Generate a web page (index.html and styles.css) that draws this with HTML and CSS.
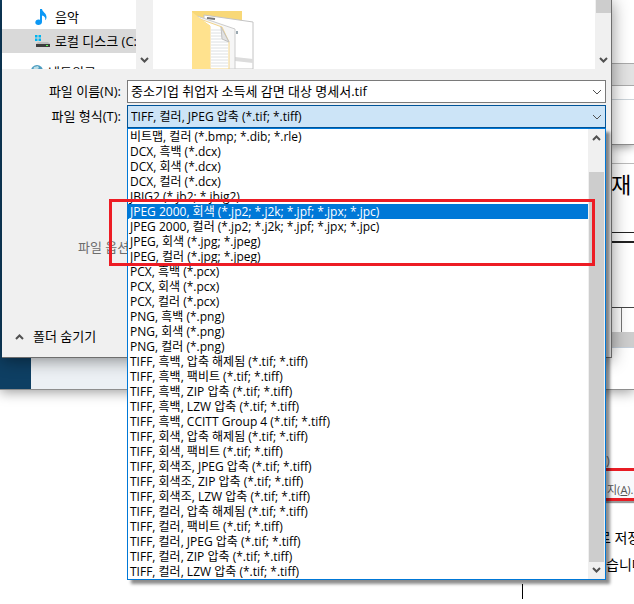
FILE: index.html
```
<!DOCTYPE html>
<html lang="ko">
<head>
  <meta charset="UTF-8" />
  <meta name="viewport" content="width=device-width, initial-scale=1.0" />
  <title>다른 이름으로 저장</title>
  <link rel="stylesheet" href="styles.css">
</head>
<body>
  <div class="desktop">

    <!-- Document page behind everything -->
    <div class="doc-shot">
      <span class="shot-note">)</span>
      <div class="shot-menu">지(<u>A</u>).</div>
    </div>
    <div class="doc-text">
      <p>로 저장</p>
      <p class="next">습니다</p>
    </div>
    <div class="caret"></div>

    <!-- Viewer window -->
    <div class="viewer">
      <div class="viewer-side"></div>
      <div class="viewer-body"></div>
      <div class="viewer-page">
        <div class="page-title">재</div>
        <div class="page-rule"></div>
        <div class="page-cell"></div>
        <div class="page-foot"></div>
        <div class="page-scroll"></div>
      </div>
    </div>
    <div class="panel">
      <div class="panel-top"></div>
      <div class="panel-bar"></div>
      <div class="panel-row"></div>
    </div>

    <!-- Save dialog -->
    <form class="dialog">
      <div class="browser">
        <nav class="tree">
          <a href="#" class="tree-item">
            <svg width="16" height="16" viewBox="0 0 16 16"><path d="M6 0h2c.3 3 4.500 4 4.500 8 0 1.500-.5 2.500-1.200 3.300.4-3-1-4.300-3.300-4.800v6.500C8 14.800 6.200 16 4.300 16 2.500 16 1.300 15 1.300 13.600c0-1.700 1.500-3 3.200-3 .6 0 1 .1 1.500.3z" fill="#0c98f5"/></svg>
            음악
          </a>
          <a href="#" class="tree-item selected">
            <svg width="16" height="14" viewBox="0 0 16 14"><path d="M1 1h2.500v2.500H1zM4.500 1H7v2.500H4.500zM1 4.500h2.500V7H1zM4.500 4.500H7V7H4.500z" fill="#00b4f0"/><path d="M4 8h10l2 2H2z" fill="#bdbdbd"/><path d="M2 10h14v3H2z" fill="#3d3d3d"/><path d="M12 11h2v1h-2z" fill="#5f5"/></svg>
            로컬 디스크 (C:)
          </a>
          <a href="#" class="tree-item network">
            <svg width="14" height="14" viewBox="0 0 14 14"><circle cx="6" cy="6" r="6" fill="#4c9cc0"/><path d="M3 2l4-1 1 2-3 2-3 1zM8 4l3 1v3H8z" fill="#b9dde6"/></svg>
            네트워크
          </a>
        </nav>
        <div class="scroll">
          <svg width="9" height="7" viewBox="0 0 9 7"><path d="M1 1l3.500 3.500L8 1" fill="none" stroke="#505050" stroke-width="2"/></svg>
        </div>
        <div class="files">
          <svg width="62" height="58" viewBox="0 0 62 58">
            <path d="M0 0h50v58H0z" fill="#f8d877"/>
            <path d="M12 4l49 7v47H12z" fill="#fff" stroke="#c4c4c4"/>
            <path d="M15 7l8 1" stroke="#777" stroke-width="2"/>
            <path d="M43 46l18 2v4l-18-2z" fill="#dcdcdc"/>
            <path d="M45 20v3" stroke="#9aa8b0" stroke-width="2"/>
            <path d="M5 5l38 13v40H18z" fill="#f6f6f6" stroke="#ccc"/>
            <path d="M8 8l22 8 7 15v27H18V15z" fill="#fff" stroke="#f3d489"/>
            <path d="M19 19h10M19 22h11M19 25h11M19 28h11M19 31h17M19 34h17M19 37h17M19 40h17M19 43h17M19 46h17M19 49h17M19 52h17M19 55h17" stroke="#dde0e2"/>
            <path d="M29 16l8 15-7-3z" fill="#e2e2e2" stroke="#c0c0c0"/>
            <path d="M0 1l18 14v43H0z" fill="#ffe28e"/>
          </svg>
        </div>
        <div class="scroll scroll-files">
          <div class="thumb"></div>
          <svg width="9" height="7" viewBox="0 0 9 7"><path d="M1 1l3.500 3.500L8 1" fill="none" stroke="#505050" stroke-width="2"/></svg>
        </div>
      </div>

      <div class="field">
        <label for="filename">파일 이름(N):</label>
        <div class="combo">
          <input type="text" id="filename" value="중소기업 취업자 소득세 감면 대상 명세서.tif">
          <svg class="arrow" width="10" height="6" viewBox="0 0 10 6"><path d="M1 1l4 4 4-4" fill="none" stroke="#505050"/></svg>
        </div>
      </div>
      <div class="field">
        <label for="filetype">파일 형식(T):</label>
        <div class="combo">
          <select id="filetype">
            <option>TIFF, 컬러, JPEG 압축 (*.tif; *.tiff)</option>
          </select>
          <svg class="arrow" width="10" height="6" viewBox="0 0 10 6"><path d="M1 1l4 4 4-4" fill="none" stroke="#505050"/></svg>

          <div class="popup">
            <ul role="listbox" aria-label="파일 형식">
              <li role="option">비트맵, 컬러 (*.bmp; *.dib; *.rle)</li>
              <li role="option">DCX, 흑백 (*.dcx)</li>
              <li role="option">DCX, 회색 (*.dcx)</li>
              <li role="option">DCX, 컬러 (*.dcx)</li>
              <li role="option">JBIG2 (*.jb2; *.jbig2)</li>
              <li role="option" class="active" aria-selected="true">JPEG 2000, 회색 (*.jp2; *.j2k; *.jpf; *.jpx; *.jpc)</li>
              <li role="option">JPEG 2000, 컬러 (*.jp2; *.j2k; *.jpf; *.jpx; *.jpc)</li>
              <li role="option">JPEG, 회색 (*.jpg; *.jpeg)</li>
              <li role="option">JPEG, 컬러 (*.jpg; *.jpeg)</li>
              <li role="option">PCX, 흑백 (*.pcx)</li>
              <li role="option">PCX, 회색 (*.pcx)</li>
              <li role="option">PCX, 컬러 (*.pcx)</li>
              <li role="option">PNG, 흑백 (*.png)</li>
              <li role="option">PNG, 회색 (*.png)</li>
              <li role="option">PNG, 컬러 (*.png)</li>
              <li role="option">TIFF, 흑백, 압축 해제됨 (*.tif; *.tiff)</li>
              <li role="option">TIFF, 흑백, 팩비트 (*.tif; *.tiff)</li>
              <li role="option">TIFF, 흑백, ZIP 압축 (*.tif; *.tiff)</li>
              <li role="option">TIFF, 흑백, LZW 압축 (*.tif; *.tiff)</li>
              <li role="option">TIFF, 흑백, CCITT Group 4 (*.tif; *.tiff)</li>
              <li role="option">TIFF, 회색, 압축 해제됨 (*.tif; *.tiff)</li>
              <li role="option">TIFF, 회색, 팩비트 (*.tif; *.tiff)</li>
              <li role="option">TIFF, 회색조, JPEG 압축 (*.tif; *.tiff)</li>
              <li role="option">TIFF, 회색조, ZIP 압축 (*.tif; *.tiff)</li>
              <li role="option">TIFF, 회색조, LZW 압축 (*.tif; *.tiff)</li>
              <li role="option">TIFF, 컬러, 압축 해제됨 (*.tif; *.tiff)</li>
              <li role="option">TIFF, 컬러, 팩비트 (*.tif; *.tiff)</li>
              <li role="option">TIFF, 컬러, JPEG 압축 (*.tif; *.tiff)</li>
              <li role="option">TIFF, 컬러, ZIP 압축 (*.tif; *.tiff)</li>
              <li role="option">TIFF, 컬러, LZW 압축 (*.tif; *.tiff)</li>
            </ul>
            <div class="popup-scroll">
              <svg width="9" height="7" viewBox="0 0 9 7"><path d="M1 6l3.500-3.500L8 6" fill="none" stroke="#505050" stroke-width="2"/></svg>
              <div class="thumb"></div>
              <svg width="9" height="7" viewBox="0 0 9 7"><path d="M1 1l3.500 3.500L8 1" fill="none" stroke="#505050" stroke-width="2"/></svg>
            </div>
            <div class="marker"></div>
          </div>
        </div>
      </div>

      <div class="options">파일 옵션</div>
      <button type="button" class="hide-folders">
        <svg width="9" height="7" viewBox="0 0 9 7"><path d="M1 6l3.500-3.500L8 6" fill="none" stroke="#505050" stroke-width="2"/></svg>
        폴더 숨기기
      </button>
    </form>

  </div>
</body>
</html>
```
FILE: styles.css
```
* {
  box-sizing: border-box;
}
body {
  margin: 0;
  background: #fff;
  color: #000;
  font-family: "Open Sans", "Noto Sans CJK KR", sans-serif;
  font-size: 13px;
  line-height: 15px;
}
.desktop {
  position: relative;
  min-height: 604px;
  overflow: hidden;
}

/* document page */
.doc-shot {
  position: absolute;
  top: 453px;
  right: 0;
  width: 30px;
  color: #555;
}
.shot-note {
  display: block;
  padding-left: 2px;
  color: #777;
}
.shot-menu {
  height: 33px;
  border-top: 3px solid #e81c24;
  border-bottom: 3px solid #e81c24;
  padding: 12px 0 0 3px;
  background: #f8f9fb;
  box-shadow: 0 2px 1px #999;
  font-size: 11px;
  line-height: 14px;
  white-space: nowrap;
}
.doc-text {
  position: absolute;
  top: 524px;
  right: 0;
  width: 36px;
  font-size: 14px;
  line-height: 27px;
  white-space: nowrap;
}
.doc-text p {
  margin: 0;
}
.doc-text .next {
  padding-left: 8px;
}
.caret {
  position: absolute;
  top: 584px;
  left: 522px;
  width: 1px;
  height: 15px;
  background: #000;
}

/* viewer window */
.viewer {
  position: absolute;
  top: 0;
  left: 0;
  right: 0;
  height: 390px;
  display: flex;
  border-bottom: 1px solid #8e8e8e;
  box-shadow: 0 2px 12px rgba(0, 0, 0, 0.4);
}
.viewer-side {
  width: 31px;
  background: #0e3f63;
}
.viewer-body {
  flex: 1;
  background: #ecf0f4;
}
.viewer-page {
  width: 24px;
  padding-top: 163px;
  background: #fff;
}
.page-title {
  height: 70px;
  border-top: 1px solid #bbb;
  border-bottom: 1px solid #222;
  padding: 5px 0 0 1px;
  font-size: 22px;
  line-height: 30px;
}
.page-rule {
  height: 10px;
  border-bottom: 2px solid #222;
}
.page-cell {
  height: 65px;
  border-bottom: 1px solid #444;
}
.page-foot {
  width: 12px;
  height: 24px;
  border-right: 1px solid #777;
}
.page-scroll {
  height: 16px;
  background: #cdcdcd;
  border-bottom: 1px solid #c5d0dc;
}

/* small window in the corner */
.panel {
  position: absolute;
  top: 0;
  right: 0;
  width: 24px;
  height: 145px;
  background: #fff;
  border-bottom: 1px solid #8e8e8e;
  box-shadow: 0 2px 10px rgba(0, 0, 0, 0.4);
}
.panel-top {
  height: 64px;
  border-bottom: 1px solid #aaa;
}
.panel-bar {
  height: 22px;
  background: #e2e2e2;
  border-bottom: 1px solid #aaa;
}
.panel-row {
  height: 14px;
  border-bottom: 1px solid #ccd4da;
}

/* save dialog */
.dialog {
  position: absolute;
  top: 0;
  left: 2px;
  right: 22px;
  height: 358px;
  display: flex;
  flex-direction: column;
  background: #f0f0f0;
  border-right: 1px solid #6e6e6e;
  border-bottom: 1px solid #6e6e6e;
  box-shadow: 0 2px 16px rgba(0, 0, 0, 0.45);
}
.browser {
  display: flex;
  height: 69px;
  margin-bottom: 11px;
  overflow: hidden;
}
.tree {
  width: 134px;
  padding-top: 5px;
  background: #fff;
}
.tree-item {
  display: flex;
  align-items: center;
  gap: 5px;
  height: 24px;
  padding-left: 32px;
  color: #000;
  text-decoration: none;
  white-space: nowrap;
  overflow: hidden;
}
.tree-item svg {
  flex: none;
}
.tree-item.selected {
  background: #d9d9d9;
}
.tree-item.network {
  height: 38px;
  padding-left: 29px;
  gap: 3px;
}
.scroll {
  display: flex;
  flex-direction: column;
  align-items: center;
  justify-content: flex-end;
  width: 17px;
  padding-bottom: 5px;
}
.scroll-files {
  width: 16px;
  justify-content: space-between;
}
.scroll-files .thumb {
  width: 15px;
  height: 13px;
}
.thumb {
  background: #cdcdcd;
}
.files {
  flex: 1;
  padding: 11px 0 0 39px;
  background: #fff;
}
.field {
  display: flex;
  align-items: center;
  gap: 6px;
  height: 23px;
  margin: 0 5px 2px 0;
}
.field label {
  width: 119px;
  text-align: right;
}
.combo {
  position: relative;
  flex: 1;
  height: 23px;
}
.combo input,
.combo select {
  display: block;
  width: 100%;
  height: 100%;
  margin: 0;
  padding: 0 20px 2px 3px;
  border: 1px solid #7a7a7a;
  border-radius: 0;
  background: #fff;
  color: #000;
  font: inherit;
  appearance: none;
  outline: none;
}
.combo select {
  padding-bottom: 0;
  border-color: #005499;
  background: #cce4f7;
  font-size: 12px;
}
.arrow {
  position: absolute;
  top: 9px;
  right: 4px;
}
.popup {
  position: absolute;
  top: 100%;
  left: 0;
  right: 0;
  z-index: 2;
  display: flex;
  border: 1px solid #0078d7;
  background: #fff;
  box-shadow: 4px 4px 3px rgba(0, 0, 0, 0.45);
  font-size: 12px;
}
.popup ul {
  flex: 1;
  margin: 0;
  padding: 0;
  list-style: none;
}
.popup li {
  height: 15px;
  padding-left: 2px;
  white-space: nowrap;
}
.popup li.active {
  background: #0078d7;
  color: #fff;
}
.popup-scroll {
  display: flex;
  flex-direction: column;
  align-items: center;
  width: 17px;
  padding: 5px 0;
  background: #f0f0f0;
}
.popup-scroll .thumb {
  flex: 1;
  width: 15px;
  margin: 31px 0 5px;
}
.marker {
  position: absolute;
  top: 70px;
  left: -19px;
  right: 10px;
  height: 67px;
  border: 3px solid #ed1c24;
}
.options {
  margin: 110px 0 0 76px;
  color: #6d6d6d;
}
.hide-folders {
  display: flex;
  align-items: center;
  gap: 9px;
  margin: auto 0 13px 13px;
  padding: 0;
  border: 0;
  background: none;
  color: #000;
  font: inherit;
}
```
